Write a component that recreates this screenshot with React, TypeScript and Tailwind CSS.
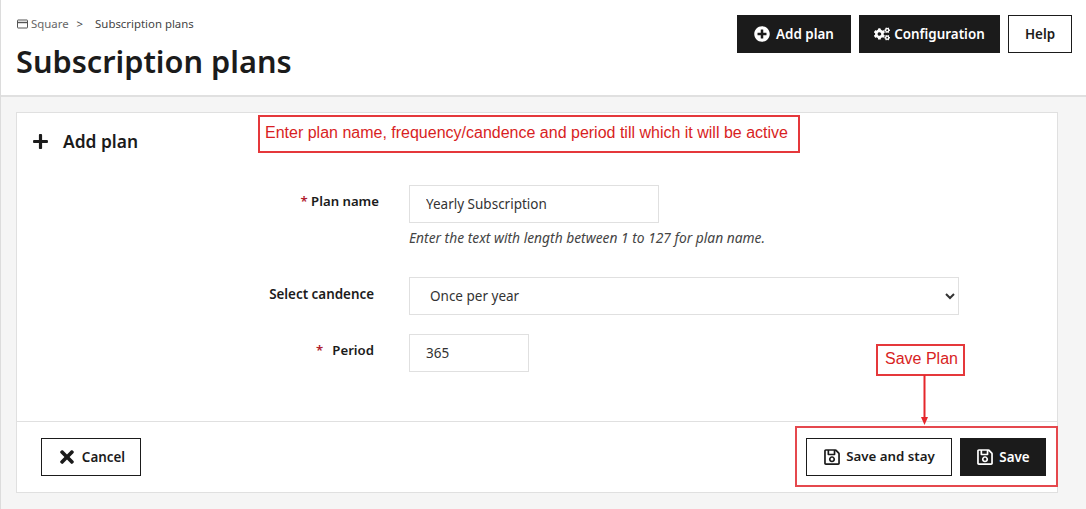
import { FaCogs, FaPlus, FaPlusCircle, FaRegSave, FaTimes } from 'react-icons/fa';

const font = { fontFamily: '"Noto Sans", Roboto, sans-serif' };

function CardIcon() {
  return (
    <svg width="11" height="10" viewBox="0 0 11 10" fill="none" stroke="#555" strokeWidth="1" className="ml-px mr-[3px]">
      <rect x="0.5" y="1" width="10" height="8" rx="0.5" />
      <path d="M0.5 3.5h10" strokeWidth="1.4" />
    </svg>
  );
}

export default function App() {
  return (
    <div className="relative h-[509px] w-[1086px] overflow-hidden border-l border-[#dcdcdc] bg-[#f5f5f5] text-[#1b1b1b] [font-family:'Noto_Sans',Roboto,sans-serif]">
      {/* Header */}
      <header className="flex h-[97px] items-start justify-between border-b-2 border-[#e0e0e0] bg-white pl-[15px] pr-[14px]">
        <div>
          <div className="mt-[16px] flex h-4 items-center text-[11.4px] text-[#444]">
            <CardIcon />
            <span className="text-[#666]">Square</span>
            <span className="ml-[8px] mr-[12px] text-[#444]">&gt;</span>
            <span>Subscription plans</span>
          </div>
          <h1 className="mt-[7px] text-[30.7px] font-semibold leading-[44px] text-[#1b1b1b]">Subscription plans</h1>
        </div>
        <div className="mt-[15px] flex gap-2">
          <button className="flex h-[38px] w-[114px] items-center justify-center gap-[6px] bg-[#1b1b1b] text-[13.4px] font-semibold text-white">
            <FaPlusCircle className="text-[16px]" />
            Add plan
          </button>
          <button className="flex h-[38px] w-[141px] items-center justify-center gap-[4px] bg-[#1b1b1b] text-[13.4px] font-semibold text-white">
            <FaCogs className="text-[16px]" />
            Configuration
          </button>
          <button className="h-[38px] w-[64px] border border-[#1b1b1b] bg-white text-[13.4px] font-semibold">Help</button>
        </div>
      </header>

      {/* Card */}
      <main className="ml-[15px] mt-[15px] flex h-[381px] w-[1042px] flex-col border border-[#e0e0e0] bg-white">
        <div className="flex h-[72px] shrink-0 items-start pl-[15px] pt-[16px]">
          <FaPlus className="mt-[4px] text-[17px]" />
          <h2 className="ml-[14px] text-[17.4px] font-semibold leading-[24px]">Add plan</h2>
        </div>

        <div className="flex-1 text-[13px]">
          <div className="flex">
            <label className="mr-[-5px] mt-[7px] w-[362px] text-right text-[13.2px] font-semibold">
              <span className="text-[#b01c2e]">*</span> Plan name
            </label>
            <div className="ml-[35px]">
              <input
                readOnly
                value="Yearly Subscription"
                className="h-[38px] w-[250px] border border-[#e0e0e0] px-4 pb-[1px] text-[13.5px] text-[#333] outline-none"
                style={font}
              />
              <p className="mt-[7px] text-[13.8px] italic leading-4 text-[#444]">
                Enter the text with length between 1 to 127 for plan name.
              </p>
            </div>
          </div>

          <div className="mt-[31px] flex">
            <label className="mt-[7px] w-[357px] text-right text-[13.4px] font-semibold">Select candence</label>
            <select
              defaultValue="year"
              className="ml-[35px] h-[38px] w-[550px] border border-[#e0e0e0] bg-white px-4 text-[13.5px] text-[#333] outline-none"
              style={font}
            >
              <option value="year">Once per year</option>
            </select>
          </div>

          <div className="mt-[19px] flex">
            <label className="mt-[7px] w-[357px] text-right text-[13.2px] font-semibold">
              <span className="mr-[9px] text-[#b01c2e]">*</span>Period
            </label>
            <input
              readOnly
              value="365"
              className="ml-[35px] h-[38px] w-[120px] border border-[#e0e0e0] px-4 pb-[1px] text-[13.5px] text-[#333] outline-none"
              style={font}
            />
          </div>
        </div>

        {/* Footer */}
        <div className="flex h-[71px] shrink-0 items-center justify-between border-t border-[#e0e0e0] pl-[24px] pr-[11px]">
          <button className="flex h-[38px] w-[100px] items-center justify-center gap-[5px] border border-[#1b1b1b] bg-white text-[13.4px] font-semibold">
            <FaTimes className="text-[20px]" />
            Cancel
          </button>
          <div className="flex gap-2">
            <button className="flex h-[38px] w-[146px] items-center justify-center gap-[5px] border border-[#1b1b1b] bg-white text-[13.3px] font-semibold">
              <FaRegSave className="text-[18px]" />
              Save and stay
            </button>
            <button className="flex h-[38px] w-[86px] items-center justify-center gap-[5px] bg-[#1b1b1b] text-[13.4px] font-semibold text-white">
              <FaRegSave className="text-[18px]" />
              Save
            </button>
          </div>
        </div>
      </main>

      {/* Annotations */}
      <div className="absolute left-[257px] top-[115px] flex h-[38px] w-[542px] items-center border-2 border-[#e5383b] pb-[2px] pl-[5px] text-[16px] text-[#d81e23] [font-family:'Liberation_Sans',Arial,sans-serif]">
        Enter plan name, frequency/candence and period till which it will be active
      </div>
      <div className="absolute left-[875px] top-[344px] flex h-[32px] w-[89px] items-center justify-center border-2 border-[#e5383b] pb-[2px] pl-[2px] text-[16px] text-[#d81e23] [font-family:'Liberation_Sans',Arial,sans-serif]">
        Save Plan
      </div>
      <svg className="absolute left-[917px] top-[375px]" width="14" height="50" viewBox="0 0 14 50">
        <path d="M6.5 0V44" stroke="#e5262b" strokeWidth="2" />
        <path d="M3 42h7l-3.5 8z" fill="#e5262b" />
      </svg>
      <div className="absolute left-[794px] top-[426px] h-[61px] w-[263px] border-2 border-[#e5484d]" />
    </div>
  );
}
